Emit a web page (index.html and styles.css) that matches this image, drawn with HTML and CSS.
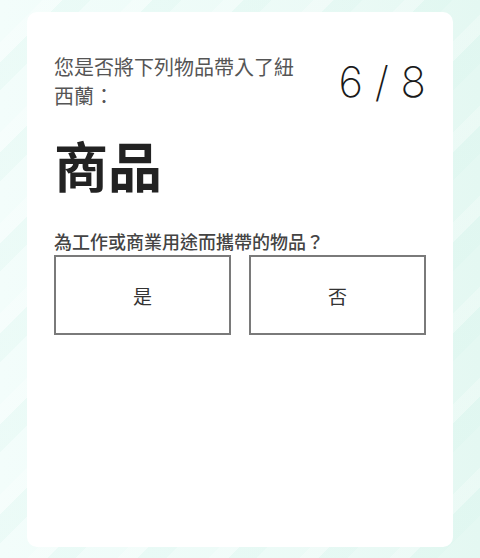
FILE: index.html
```html
<!DOCTYPE html>
<html lang="zh-Hant">
<head>
<meta charset="utf-8">
<link rel="stylesheet" href="styles.css">
</head>
<body>
<div class="page">
  <main class="card">
    <div class="head">
      <p class="intro">您是否將下列物品帶入了紐西蘭：</p>
      <div class="count">6 / 8</div>
    </div>
    <h1 class="title">商品</h1>
    <p class="question">為工作或商業用途而攜帶的物品？</p>
    <div class="choices">
      <button class="choice">是</button>
      <button class="choice">否</button>
    </div>
  </main>
</div>
</body>
</html>
```
FILE: styles.css
```css
html, body {
  margin: 0;
  padding: 0;
}
body {
  width: 480px;
  height: 558px;
  overflow: hidden;
  font-family: "Noto Sans CJK TC", "Noto Sans", sans-serif;
  background-color: #ebfaf6;
  background-image:
    linear-gradient(90deg, #f3fdfb 0%, #effcf9 30%, #ebfaf6 70%, #e4f8f2 100%);
}
.page {
  padding: 12px 27px 11px 27px;
  box-sizing: border-box;
  height: 558px;
  background-image:
    repeating-linear-gradient(135deg, rgba(255,255,255,0) 0 30px, rgba(255,255,255,0.25) 30px 44px, rgba(214,244,236,0.25) 44px 64px);
}
.card {
  background: #ffffff;
  border-radius: 10px;
  height: 535px;
  box-sizing: border-box;
  padding: 40px 27px;
}
.head {
  display: flex;
  justify-content: space-between;
  align-items: flex-start;
}
.intro {
  margin: 0;
  width: 250px;
  font-size: 20px;
  line-height: 29px;
  color: #555555;
}
.count {
  font-family: Inter, "Noto Sans", sans-serif;
  font-weight: 200;
  font-size: 42px;
  line-height: 60px;
  color: #1a1a1a;
  margin-top: 0;
}
.title {
  margin: 20px 0 0 0;
  font-size: 54px;
  line-height: 65px;
  font-weight: 700;
  color: #222222;
}
.question {
  margin: 32px 0 1px 0;
  font-size: 18px;
  line-height: 25px;
  font-weight: 500;
  color: #444444;
}
.choices {
  display: grid;
  grid-template-columns: 1fr 1fr;
  gap: 18px;
}
.choice {
  height: 80px;
  background: #ffffff;
  border: 2px solid #7a7a7a;
  border-radius: 0;
  font-family: "Noto Sans CJK TC", sans-serif;
  font-size: 19px;
  color: #333333;
  padding: 0;
}
```
